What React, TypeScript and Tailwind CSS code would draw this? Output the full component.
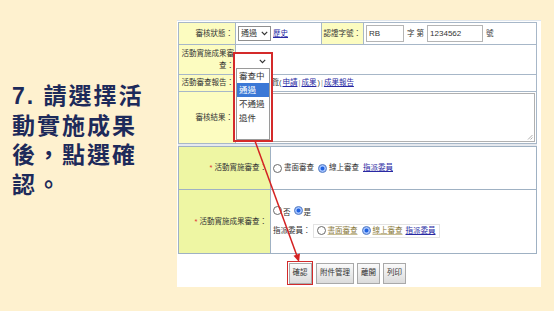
import React from "react";

const Radio = ({ checked }: { checked?: boolean }) =>
  checked ? (
    <span className="inline-block w-[9px] h-[9px] rounded-full bg-[#1f62e0] border border-[#6f8fc8] shadow-[inset_0_0_0_1.5px_#a9c6ff] shrink-0" />
  ) : (
    <span className="inline-block w-[9px] h-[9px] rounded-full bg-white border border-[#6a6a6a] shrink-0" />
  );

const Chevron = () => (
  <svg width="7" height="5" viewBox="0 0 7 5" className="shrink-0">
    <path d="M0.8 0.8 L3.5 3.6 L6.2 0.8" fill="none" stroke="#333" strokeWidth="1.2" />
  </svg>
);

const btn =
  "h-[21px] px-[3px] border border-[#a9a9a9] bg-gradient-to-b from-[#fafafa] to-[#dcdcdc] flex items-center";

export default function App() {
  return (
    <div className="relative w-[554px] h-[311px] bg-[#FEF1CF] overflow-hidden flex font-['Liberation_Sans','Noto_Sans_CJK_TC',sans-serif]">
      {/* Left instruction text */}
      <div className="w-[177px] shrink-0 pl-[12px] pt-[82px] font-['Liberation_Sans','Noto_Sans_CJK_TC',sans-serif] font-bold text-[23px] leading-[29.5px] tracking-[2px] text-[#1D2A5A]">
        <div className="h-[29.5px]">7. 請選擇活</div>
        <div className="h-[29.5px]">動實施成果</div>
        <div className="h-[29.5px]">後，點選確</div>
        <div className="h-[29.5px]">認。</div>
      </div>

      {/* Screenshot panel */}
      <div className="relative mt-[20px] w-[364px] h-[267px] bg-white border-t border-[#dfe6ee] pt-[1px] text-[7.5px] leading-[10px] whitespace-nowrap text-[#333] font-['Liberation_Sans','Noto_Sans_CJK_TC',sans-serif]">
        {/* Top table */}
        <div className="ml-[1px] w-[359px] border border-[#A7B7C8] flex flex-col">
          {/* Row 1 */}
          <div className="h-[22px] flex border-b border-[#A7B7C8]">
            <div className="w-[57px] shrink-0 bg-[#FCFCC0] border-r border-[#A7B7C8] flex items-center justify-end pr-[2px]">審核狀態：</div>
            <div className="w-[85px] shrink-0 flex items-center pl-[2px] gap-[2px]">
              <div className="w-[33px] h-[15px] border border-[#8f8f8f] flex items-center justify-between px-[2px] text-[8px]">
                <span>通過</span>
                <Chevron />
              </div>
              <span className="text-[#2929A3] underline">歷史</span>
            </div>
            <div className="w-[43px] shrink-0 bg-[#FCFCC0] border-l border-r border-[#A7B7C8] flex items-center justify-end pr-[2px]">認證字號：</div>
            <div className="flex-1 flex items-center pl-[2px] text-[8px]">
              <div className="w-[38px] h-[17px] border border-[#b5b5b5] flex items-center pl-[2px]">RB</div>
              <span className="mx-[3px] text-[7.5px]">字 第</span>
              <div className="w-[56px] h-[17px] border border-[#b5b5b5] flex items-center pl-[2px]">1234562</div>
              <span className="ml-[3px] text-[7.5px]">號</span>
            </div>
          </div>
          {/* Row 2 */}
          <div className="h-[30px] flex border-b border-[#A7B7C8]">
            <div className="w-[57px] shrink-0 bg-[#FCFCC0] border-r border-[#A7B7C8] flex flex-col items-end justify-center pr-[1px] leading-[12px] text-right">
              <span>活動實施成果審</span>
              <span>查：</span>
            </div>
            <div className="flex-1" />
          </div>
          {/* Row 3 */}
          <div className="h-[17px] flex border-b border-[#A7B7C8]">
            <div className="w-[57px] shrink-0 bg-[#FCFCC0] border-r border-[#A7B7C8] flex items-center justify-end pr-[1px]">活動審查報告：</div>
            <div className="flex-1 flex items-center pl-[28px] gap-[1px]">
              <span>預覽(</span>
              <span className="text-[#2929A3] underline">申請</span>
              <span className="text-[#999]">|</span>
              <span className="text-[#2929A3] underline">成果</span>
              <span>)</span>
              <span className="text-[#999]">|</span>
              <span className="text-[#2929A3] underline">成果報告</span>
            </div>
          </div>
          {/* Row 4 */}
          <div className="h-[51px] flex">
            <div className="w-[57px] shrink-0 bg-[#FCFCC0] border-r border-[#A7B7C8] flex items-center justify-end pr-[2px]">審核結果：</div>
            <div className="flex-1 flex py-[1px] pl-[5px] pr-[1px]">
              <div className="relative flex-1 border border-[#b0b0b0]">
                <svg width="6" height="6" viewBox="0 0 6 6" className="absolute right-[1px] bottom-[1px]">
                  <path d="M5.5 1 L1 5.5 M5.5 3.5 L3.5 5.5" stroke="#999" strokeWidth="0.8" />
                </svg>
              </div>
            </div>
          </div>
        </div>

        <div className="h-[2px] ml-[1px] w-[359px] bg-[#e6e9ee]" />

        {/* Second table */}
        <div className="ml-[1px] w-[359px] border border-[#9FB1C3] flex flex-col">
          <div className="h-[43px] flex border-b border-[#9FB1C3]">
            <div className="w-[92px] shrink-0 bg-[#EEF6A3] border-r border-[#9FB1C3] flex items-center justify-end pr-[3px]">
              <span className="text-[#E03030] mr-[2px]">*</span>活動實施審查：
            </div>
            <div className="flex-1 flex items-center pl-[2px] gap-[2px]">
              <Radio />
              <span className="mr-[2px]">書面審查</span>
              <Radio checked />
              <span className="mr-[2px]">線上審查</span>
              <span className="text-[#2929A3] underline">指派委員</span>
            </div>
          </div>
          <div className="h-[63px] flex">
            <div className="w-[92px] shrink-0 bg-[#EEF6A3] border-r border-[#9FB1C3] flex items-center justify-end pr-[3px]">
              <span className="text-[#E03030] mr-[2px]">*</span>活動實施成果審查：
            </div>
            <div className="flex-1 flex flex-col justify-center pl-[2px] leading-[18px]">
              <div className="flex items-center gap-[1px]">
                <span className="-mt-[4px] flex"><Radio /></span>
                <span className="mr-[2px]">否</span>
                <span className="-mt-[4px] flex"><Radio checked /></span>
                <span>是</span>
              </div>
              <div className="flex items-center">
                <span>指派委員：</span>
                <div className="ml-[2px] h-[14px] border border-[#e3e3e3] flex items-center gap-[2px] px-[3px]">
                  <Radio />
                  <span className="text-[#8A7A3C] underline decoration-[#c9bf95] mr-[2px]">書面審查</span>
                  <Radio checked />
                  <span className="text-[#8A7A3C] underline decoration-[#c9bf95] mr-[1px]">線上審查</span>
                  <span className="text-[#2929A3] underline">指派委員</span>
                </div>
              </div>
            </div>
          </div>
        </div>

        {/* Buttons */}
        <div className="mt-[7px] pl-[110px] flex items-center gap-[3px]">
          <div className="border-[1.5px] border-[#D22B2B] p-[0.5px]">
            <div className={btn}>確認</div>
          </div>
          <div className={btn}>附件管理</div>
          <div className={btn}>離開</div>
          <div className={btn}>列印</div>
        </div>

        {/* Dropdown overlay */}
        <div className="absolute left-[56px] top-[31px] w-[40px] h-[90px] border-2 border-[#D42A2A] bg-white flex flex-col px-[1px] pt-[1px]">
          <div className="h-[13px] bg-white flex items-center justify-end pr-[4px]">
            <Chevron />
          </div>
          <div className="flex-1 border border-[#9a9a9a] text-[8.5px] leading-[14px] flex flex-col">
            <div className="pl-[2px] h-[14px]">審查中</div>
            <div className="pl-[2px] h-[14px] bg-[#3B78D6] text-white">通過</div>
            <div className="pl-[2px] h-[14px]">不通過</div>
            <div className="pl-[2px] h-[14px]">退件</div>
          </div>
        </div>
      </div>

      {/* Red arrow */}
      <svg className="absolute left-0 top-0 pointer-events-none" width="554" height="311" viewBox="0 0 554 311">
        <line x1="255" y1="141" x2="297" y2="256" stroke="#D42222" strokeWidth="1.5" />
        <polygon points="299,262 300,253.5 293.5,255.8" fill="#D42222" />
      </svg>
    </div>
  );
}
